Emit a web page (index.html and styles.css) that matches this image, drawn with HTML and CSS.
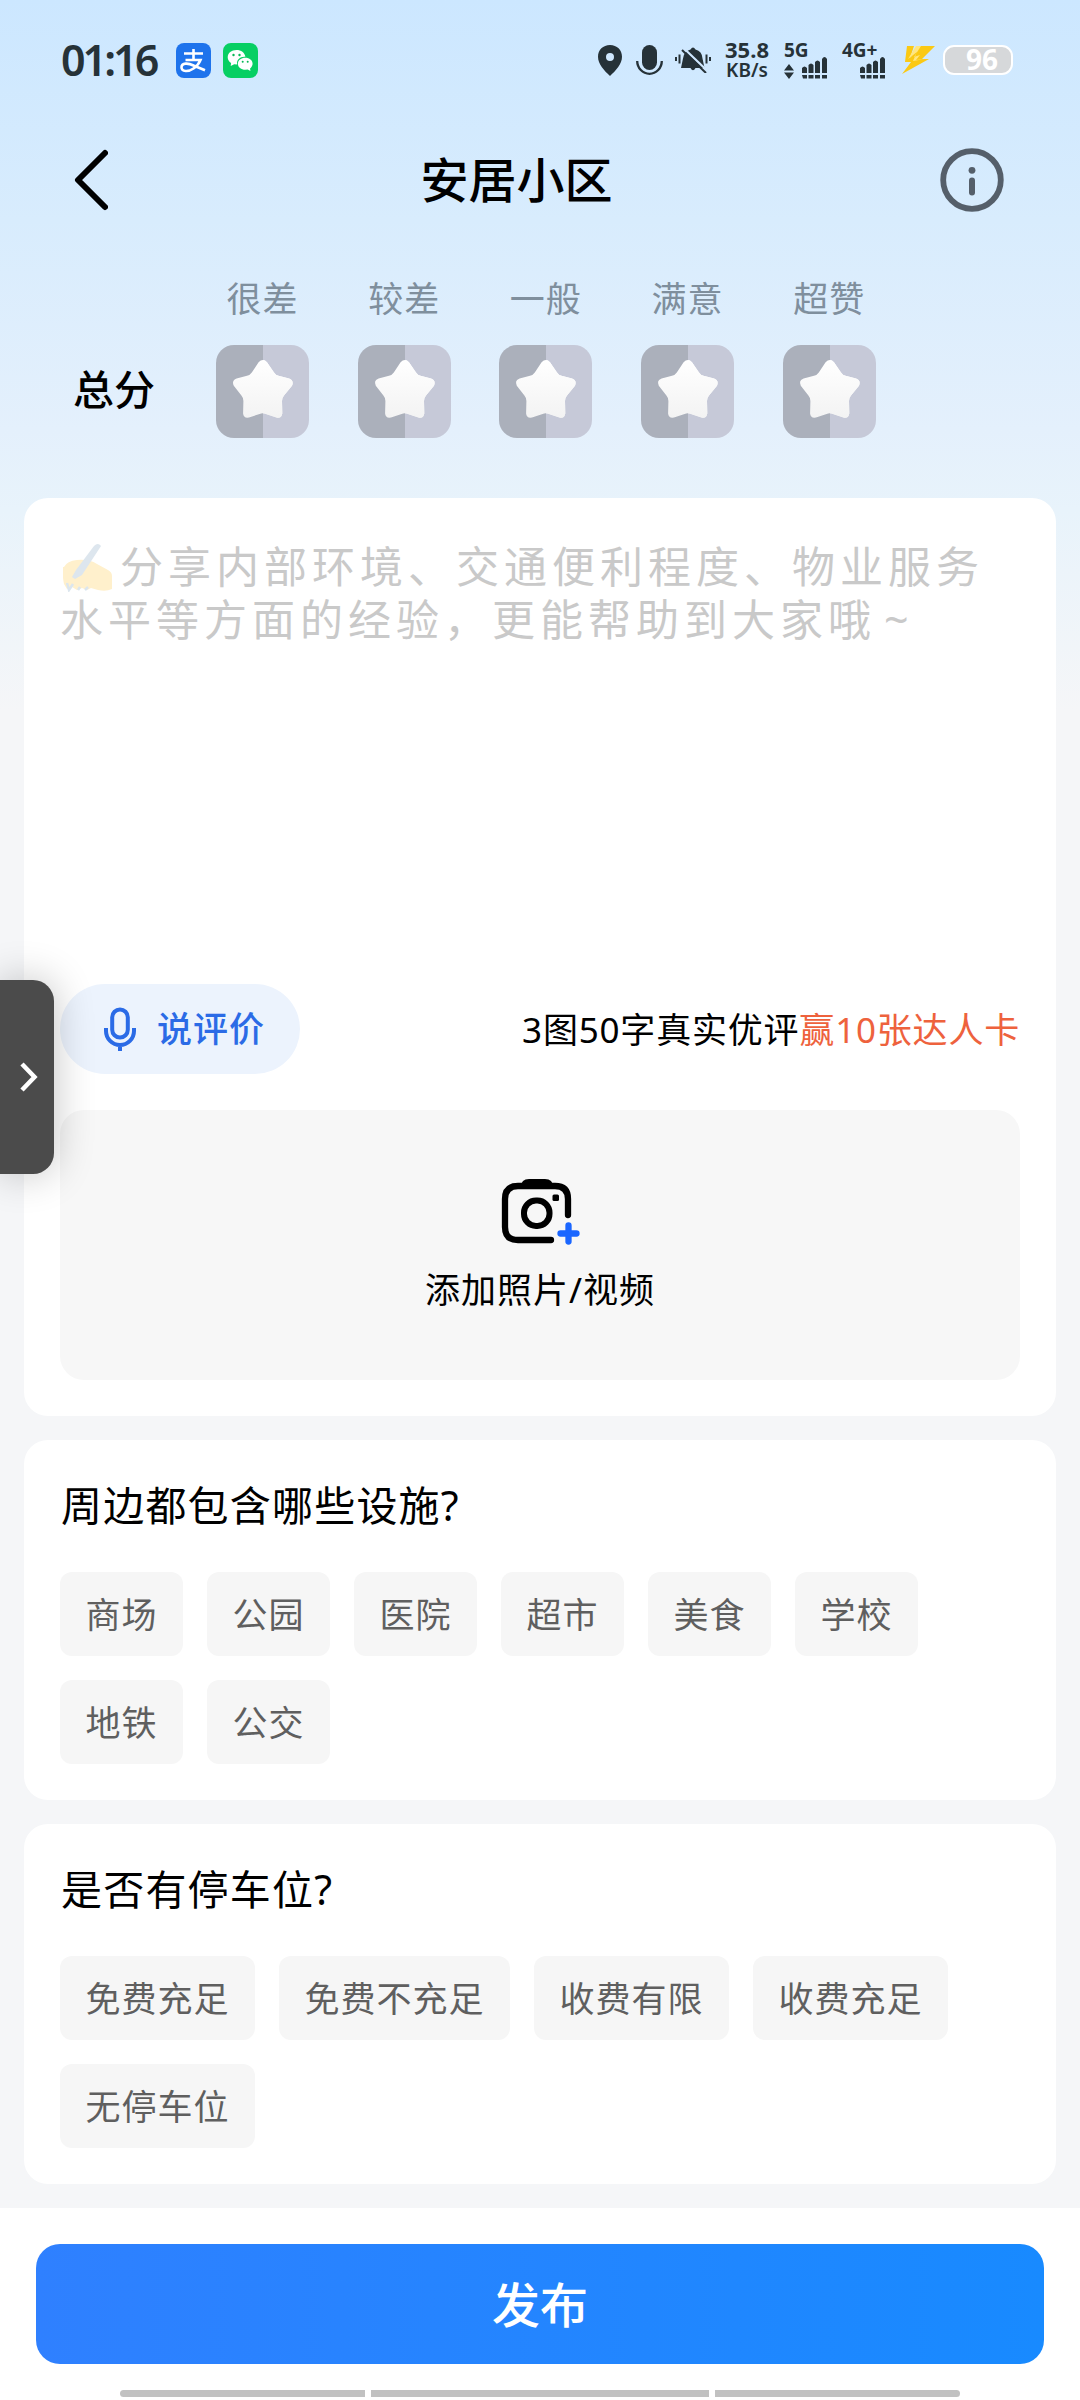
FILE: index.html
```html
<!DOCTYPE html>
<html lang="zh-CN">
<head>
<meta charset="utf-8">
<title>安居小区</title>
<link rel="stylesheet" href="styles.css">
</head>
<body>
<svg class="defs" width="0" height="0" aria-hidden="true">
  <defs>
    <linearGradient id="star-left" x1="0" y1="0" x2="0" y2="1"><stop offset="0" stop-color="#fff"/><stop offset="1" stop-color="#f3f3f3"/></linearGradient>
    <linearGradient id="star-right" x1="0" y1="0" x2="0" y2="1"><stop offset="0" stop-color="#fff"/><stop offset="1" stop-color="#f8f8f8"/></linearGradient>
    <clipPath id="half"><rect x="47" y="0" width="46" height="93"/></clipPath>
    <symbol id="star" viewBox="0 0 93 93">
      <path id="star-shape" d="M42.600 17.200Q46.800 12.800 51 17.200L58 27.500Q59.500 30 62.500 30.800L73 33.500Q78.300 35.500 76 40.800L68 50.500Q66 52.800 66 56L66.300 68.500Q65.500 73.800 60.500 72.500L50 69Q46.800 67.600 43.600 69L33 72.500Q27.500 73.500 27.100 68.500L27.400 56Q27.400 52.800 25.400 50.500L17.800 40.800Q15.300 35.500 20.600 33.500L31 30.800Q34.200 30 35.800 27.500Z" fill="url(#star-left)"/>
      <use href="#star-shape" clip-path="url(#half)" fill="url(#star-right)"/>
    </symbol>
    <symbol id="signal" viewBox="0 0 26 23">
      <path fill="#263238" d="M0 12q2.500-3 5 0v5H0zM6.500 9q2.500-3 5 0v8h-5zM13 6q2.500-3 5 0v11h-5zM20 3q2.500-4 5 0v14h-5zM0 19h5v3.500H1zM6.500 19h5v3.500h-5zM13 19h5v3.500h-5zM20 19h5v3.500h-5z"/>
    </symbol>
  </defs>
</svg>
<div class="screen">
  <header class="status">
    <span class="time">01:16</span>
    <svg class="app" viewBox="0 0 35 35">
      <rect width="35" height="35" rx="8" fill="#1e73ec"/>
      <g fill="none" stroke="#fff" stroke-width="2.600">
        <path d="M8 10.500h19M17.500 6v10.500M9.500 17h15q-2 5-7 8.500c-5 3.500-12 3.500-12-1.200 0-4.800 7-4.300 12-1.800l11.500 4.700"/>
      </g>
    </svg>
    <svg class="app wechat" viewBox="0 0 35 35">
      <rect width="35" height="35" rx="8" fill="#07cf63"/>
      <path fill="#fff" d="M13.500 7C8.500 7 4.700 10 4.700 14.200c0 2.500 1.400 4.500 3.400 5.800L7.700 23l3.500-1.800 3 .3c-1-5 3.400-8.300 8.200-7.700C21.700 9.500 18.200 7 13.500 7z"/>
      <path fill="#fff" d="M22.300 14.800c-4.200 0-7.400 2.500-7.400 6s3.300 6 7.300 6l2.500-.4 2.700 1.500-.3-2.500c1.500-1.100 2.500-2.700 2.500-4.600 0-3.500-3.200-6-7.300-6z"/>
      <g fill="#07b856"><circle cx="10.500" cy="12" r="1.200"/><circle cx="16.500" cy="12" r="1.200"/><circle cx="19.700" cy="18.700" r="1"/><circle cx="24.700" cy="18.700" r="1"/></g>
    </svg>
    <svg class="glyph" width="24" height="31" viewBox="0 0 24 31"><path fill="#263238" fill-rule="evenodd" d="M12 0C5 0 0 5 0 11.800 0 19 6 25.500 12 31 18 25.500 24 19 24 11.800 24 5 19 0 12 0zm0 8a4 4 0 1 1 0 8 4 4 0 0 1 0-8z"/></svg>
    <svg class="glyph mic" width="27" height="31" viewBox="0 0 27 31"><rect x="6" width="15" height="25" rx="7.500" fill="#263238"/><path d="M1.200 16a12.300 12.800 0 0 0 24.600 0" fill="none" stroke="#263238" stroke-width="2.300"/></svg>
    <svg class="glyph bell" width="36" height="26" viewBox="0 0 36 26"><path fill="#263238" d="M15.500 2.500q2.500-4 5 0 6.500 1.500 7 9l2 9.500H20.500q-2.500 4.500-5 0H6l2-9.500q1-7.500 7.500-9z"/><path d="M8.500 1l23 22" stroke="#d0e8ff" stroke-width="2.200"/><path d="M7 3l24 23" stroke="#263238" stroke-width="2"/><path d="M1 10v4M4.500 7.500v9M31.500 7.500v9M35 10v4" stroke="#263238" stroke-width="2"/></svg>
    <div class="speed"><b>35.8</b><span>KB/s</span></div>
    <div class="net"><b>5G</b><div class="net-row"><svg width="10" height="15" viewBox="0 0 10 15"><path fill="#263238" d="M5 0l5 6.500H0zM0 8.500h10L5 15z"/></svg><svg width="26" height="23"><use href="#signal"/></svg></div></div>
    <div class="net net-b"><b>4G+</b><div class="net-row"><svg width="26" height="23"><use href="#signal"/></svg></div></div>
    <svg class="bolt" width="33" height="28" viewBox="0 0 33 28"><path fill="#fbc914" d="M5 0h7L8 12 17 0h16L20 13h7L0 28 9 16H3z"/><path d="M14 0L6 13l9-7-4 9 12-2-9 1 4-5-6 2 7-11z" fill="#ffe681"/></svg>
    <div class="battery">96</div>
  </header>

  <nav class="nav">
    <svg class="back" width="36" height="62" viewBox="0 0 36 62"><path d="M33 4L6 31l27 27" fill="none" stroke="#000" stroke-width="6" stroke-linecap="round" stroke-linejoin="round"/></svg>
    <h1>安居小区</h1>
    <svg width="64" height="64" viewBox="0 0 64 64"><circle cx="32" cy="32" r="28.800" fill="none" stroke="#555f6a" stroke-width="5.800"/><circle cx="32" cy="22.300" r="3.400" fill="#555f6a"/><path d="M32 32.500v12" stroke="#555f6a" stroke-width="6" stroke-linecap="round"/></svg>
  </nav>

  <section class="rating">
    <span class="rating-title">总分</span>
    <div class="scale">
      <div class="score"><span>很差</span><svg><use href="#star"/></svg></div>
      <div class="score"><span>较差</span><svg><use href="#star"/></svg></div>
      <div class="score"><span>一般</span><svg><use href="#star"/></svg></div>
      <div class="score"><span>满意</span><svg><use href="#star"/></svg></div>
      <div class="score"><span>超赞</span><svg><use href="#star"/></svg></div>
    </div>
  </section>

  <main class="cards">
    <section class="card review">
      <p class="placeholder"><svg class="writing" width="50" height="48" viewBox="0 0 50 48"><path fill="#fff0cc" d="M1 23Q4 17 14 16q12-1 20 4l11 6q4 2 4 6v13q-6 3-14 1l-7-2-4 2-5-2-5 2-5-3-5 2-3-5q-2-9-1-17z"/><path fill="#dde6ee" d="M31 2q4-4 7 0L19 31l-7 4-3-2 4-7z"/><path d="M4 39l2 7 4-6M15 46l2-3M22 46l3-3" fill="none" stroke="#dce6ee" stroke-width="2.500"/></svg>分享内部环境、交通便利程度、物业服务<br>水平等方面的经验，更能帮助到大家哦<span class="tilde">~</span></p>
      <div class="actions">
        <button class="voice"><svg width="34" height="44" viewBox="0 0 34 44"><g fill="none" stroke="#2b6be6" stroke-width="4"><rect x="9.200" y="2.500" width="15.600" height="28" rx="7.800"/><path d="M3 21v3a14 14 0 0 0 28 0v-3M17 38v6"/></g></svg><span>说评价</span></button>
        <p class="promo">3图50字真实优评<em>赢10张达人卡</em></p>
      </div>
      <div class="upload">
        <svg width="80" height="68" viewBox="0 0 80 68"><path d="M50 62H17Q4 62 4 49V21Q4 8 17 8H54Q67 8 67 21V37" fill="none" stroke="#000" stroke-width="6.300" stroke-linecap="round"/><path d="M20 9q0-8 8-8h16q8 0 8 8v2H20z"/><rect x="23" y="22.500" width="25.500" height="25.500" rx="12" fill="none" stroke="#000" stroke-width="6"/><rect x="51.500" y="16.500" width="6.500" height="6.500" rx="1.500"/><path d="M67.500 47.500v16M59.500 55.500h16" stroke="#1a66ff" stroke-width="6.300" stroke-linecap="round"/></svg>
        <span>添加照片/视频</span>
      </div>
    </section>

    <section class="card question">
      <h2>周边都包含哪些设施?</h2>
      <div class="chips"><button>商场</button><button>公园</button><button>医院</button><button>超市</button><button>美食</button><button>学校</button><button>地铁</button><button>公交</button></div>
    </section>

    <section class="card question">
      <h2>是否有停车位?</h2>
      <div class="chips"><button>免费充足</button><button>免费不充足</button><button>收费有限</button><button>收费充足</button><button>无停车位</button></div>
    </section>
  </main>

  <footer class="footer">
    <button class="publish">发布</button>
    <div class="gesture"><i></i><i></i><i></i></div>
  </footer>

  <div class="handle"><svg width="20" height="32" viewBox="0 0 20 32"><path d="M3 3l12.500 13L3 29" fill="none" stroke="#fff" stroke-width="4.500"/></svg></div>
</div>
</body>
</html>
```
FILE: styles.css
```css
* { box-sizing: border-box; margin: 0; padding: 0; }
body, button { font-family: "Noto Sans", "Noto Sans CJK SC", sans-serif; }
button { border: 0; color: inherit; white-space: nowrap; }
svg { display: block; flex: none; }
em { font-style: normal; }
.defs { position: absolute; }

.screen {
  position: relative;
  width: 1080px;
  height: 2400px;
  overflow: hidden;
  display: flex;
  flex-direction: column;
  background: linear-gradient(#cce7ff 0, #d8ecfd 220px, #e4f0fc 430px, #e8f3fb 510px, #f5f6f8 710px);
}

/* system status bar */
.status { height: 120px; padding: 0 67px 0 61px; display: flex; align-items: center; color: #263238; }
.time { width: 115px; font-size: 43px; font-weight: 600; line-height: 60px; letter-spacing: -3px; white-space: nowrap; }
.app { width: 35px; height: 35px; }
.wechat { margin-left: 12px; }
.glyph { margin-left: auto; }
.mic { margin-left: 14px; }
.bell { margin-left: 12px; }
.speed { width: 46px; margin-left: 13px; display: flex; flex-direction: column; align-items: center; line-height: 21px; }
.speed b { font-size: 22px; font-weight: 700; }
.speed span { font-size: 19px; font-weight: 600; }
.net { width: 44px; height: 38px; margin-left: 14px; display: flex; flex-direction: column; justify-content: space-between; }
.net b { font-size: 19px; line-height: 18px; font-weight: 700; }
.net-row { display: flex; align-items: flex-end; justify-content: space-between; margin-top: -6px; }
.net-b { margin-left: 14px; }
.net-b .net-row { justify-content: flex-end; }
.bolt { margin-left: 16px; }
.battery { width: 70px; height: 30px; margin-left: 8px; border: 2px solid #fff; border-radius: 11px; background: #d6d8da; color: #fff; font-size: 28px; font-weight: 700; line-height: 24px; text-align: center; padding-left: 8px; }

.nav { height: 120px; padding: 0 76px 0 72px; display: flex; align-items: center; justify-content: space-between; }
.nav h1 { flex: 1; padding-right: 15px; font-size: 48px; font-weight: 500; line-height: 60px; text-align: center; }

.rating { height: 258px; padding: 36px 0 0 73px; display: flex; }
.rating-title { width: 143px; padding-top: 85px; font-size: 41px; font-weight: 500; line-height: 56px; }
.scale { display: flex; gap: 48.700px; }
.score { width: 93px; display: flex; flex-direction: column; align-items: center; gap: 24px; color: #7f8f9d; font-size: 35px; letter-spacing: 1px; line-height: 45px; }
.score svg { width: 93px; height: 93px; border-radius: 18px; background: linear-gradient(90deg, #abb0bb 47px, #c6c9d8 47px); }

.cards { padding: 0 24px; display: flex; flex-direction: column; gap: 24px; }
.card { background: #fff; border-radius: 24px; padding: 36px; }
.review { height: 918px; display: flex; flex-direction: column; }
.placeholder { height: 450px; padding-top: 6px; font-size: 43px; letter-spacing: 5px; line-height: 53px; color: #c9c9c9; white-space: nowrap; }
.writing { display: inline-block; vertical-align: -9px; margin: 0 7px 0 3px; }
.tilde { margin-left: 8px; }
.actions { height: 90px; display: flex; align-items: center; justify-content: space-between; }
.voice { width: 240px; height: 90px; border-radius: 45px; background: #ecf3fd; color: #2b6be6; display: flex; align-items: center; padding-left: 43px; gap: 20px; font-size: 35px; font-weight: 500; letter-spacing: 1px; }
.voice span { padding-bottom: 5px; }
.promo { padding-top: 2px; font-size: 35px; letter-spacing: .8px; line-height: 50px; color: #000; white-space: nowrap; }
.promo em { color: #ee623d; }
.upload { margin-top: 36px; height: 270px; border-radius: 24px; background: #f7f7f7; display: flex; flex-direction: column; align-items: center; padding-top: 68px; gap: 19px; font-size: 35px; letter-spacing: 1px; line-height: 50px; }
.upload svg { margin-left: 1px; }

.question { height: 360px; }
.question h2 { height: 96px; padding-left: 1px; font-size: 41px; font-weight: 400; letter-spacing: 1.200px; line-height: 58px; }
.chips { display: flex; flex-wrap: wrap; gap: 24px; }
.chips button { height: 84px; padding: 2px 25.500px 0; border-radius: 12px; background: #f6f6f6; color: #5f5f5f; font-size: 35px; letter-spacing: 1px; line-height: 82px; }

.footer { margin-top: 24px; flex: 1; background: #fff; padding: 36px 36px 0; }
.publish { display: block; width: 1008px; height: 120px; padding-bottom: 4px; border-radius: 24px; background: linear-gradient(90deg, #2f80ff, #188aff); color: #fff; font-size: 48px; font-weight: 500; }
.gesture { width: 840px; height: 7px; margin: 26px auto 0; display: flex; gap: 6px; border-radius: 4px; overflow: hidden; }
.gesture i { flex: 245; background: #c1c1c1; }
.gesture i:nth-child(2) { flex: 338; }

/* floating drawer handle over the page */
.handle { position: absolute; left: 0; top: 980px; width: 54px; height: 194px; border-radius: 0 21px 21px 0; background: #4b4b4b; box-shadow: 0 0 40px rgba(0, 0, 0, .24); display: flex; align-items: center; padding-left: 19px; }
```
